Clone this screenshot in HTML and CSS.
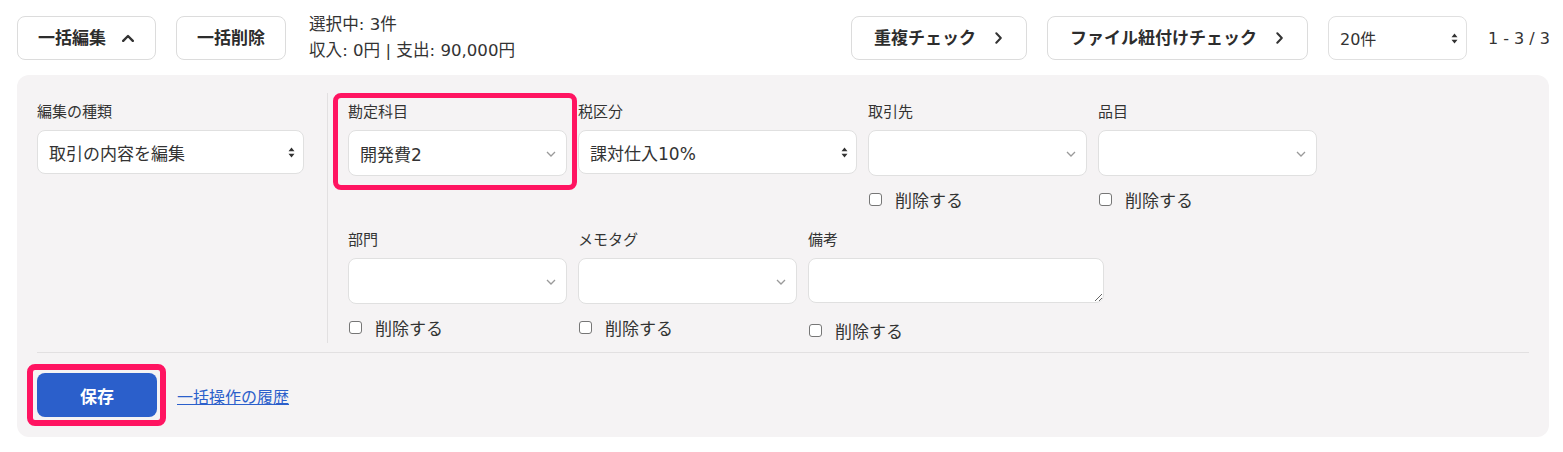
FILE: index.html
```html
<!DOCTYPE html>
<html lang="ja">
<head>
<meta charset="utf-8">
<title>一括編集</title>
<link rel="stylesheet" href="styles.css">
</head>
<body>
<div class="page">
  <div class="toolbar">
    <div class="toolbar-left">
      <button class="btn btn-edit">一括編集
        <svg class="ic-up" width="12" height="8" viewBox="0 0 12 8"><path d="M1.2 6.8 L6 2 L10.8 6.8" fill="none" stroke="#333" stroke-width="2.4" stroke-linecap="round" stroke-linejoin="round"/></svg>
      </button>
      <button class="btn">一括削除</button>
      <div class="summary">
        <div>選択中: 3件</div>
        <div>収入: 0円 | 支出: 90,000円</div>
      </div>
    </div>
    <div class="toolbar-right">
      <button class="btn btn-check">重複チェック
        <svg width="7" height="12" viewBox="0 0 7 12"><path d="M1.3 1.3 L5.8 6 L1.3 10.7" fill="none" stroke="#333" stroke-width="2" stroke-linecap="round" stroke-linejoin="round"/></svg>
      </button>
      <button class="btn btn-check">ファイル紐付けチェック
        <svg width="7" height="12" viewBox="0 0 7 12"><path d="M1.3 1.3 L5.8 6 L1.3 10.7" fill="none" stroke="#333" stroke-width="2" stroke-linecap="round" stroke-linejoin="round"/></svg>
      </button>
      <div class="select select-per">
        <span>20件</span>
        <svg class="ic-updown" width="7" height="11" viewBox="0 0 7 11"><path d="M3.5 0.5 L6.5 4.3 L0.5 4.3 Z M3.5 10.5 L6.5 6.7 L0.5 6.7 Z" fill="#333"/></svg>
      </div>
      <span class="range">1 - 3 / 3</span>
    </div>
  </div>

  <div class="panel">
    <div class="panel-body">
      <div class="col-kind">
        <div class="field">
          <div class="label">編集の種類</div>
          <div class="select select-native">
            <span>取引の内容を編集</span>
            <svg class="ic-updown" width="7" height="11" viewBox="0 0 7 11"><path d="M3.5 0.5 L6.5 4.3 L0.5 4.3 Z M3.5 10.5 L6.5 6.7 L0.5 6.7 Z" fill="#333"/></svg>
          </div>
        </div>
      </div>
      <div class="col-fields">
        <div class="field-row">
          <div class="field w219 highlight">
            <div class="label">勘定科目</div>
            <div class="select">
              <span>開発費2</span>
              <svg class="ic-down" width="10" height="6" viewBox="0 0 10 6"><path d="M1 1 L5 5 L9 1" fill="none" stroke="#9a9a9a" stroke-width="1.3"/></svg>
            </div>
          </div>
          <div class="field w279">
            <div class="label">税区分</div>
            <div class="select select-native">
              <span>課対仕入10%</span>
              <svg class="ic-updown" width="7" height="11" viewBox="0 0 7 11"><path d="M3.5 0.5 L6.5 4.3 L0.5 4.3 Z M3.5 10.5 L6.5 6.7 L0.5 6.7 Z" fill="#333"/></svg>
            </div>
          </div>
          <div class="field w219">
            <div class="label">取引先</div>
            <div class="select">
              <span></span>
              <svg class="ic-down" width="10" height="6" viewBox="0 0 10 6"><path d="M1 1 L5 5 L9 1" fill="none" stroke="#9a9a9a" stroke-width="1.3"/></svg>
            </div>
            <label class="check"><span class="box"></span>削除する</label>
          </div>
          <div class="field w219">
            <div class="label">品目</div>
            <div class="select">
              <span></span>
              <svg class="ic-down" width="10" height="6" viewBox="0 0 10 6"><path d="M1 1 L5 5 L9 1" fill="none" stroke="#9a9a9a" stroke-width="1.3"/></svg>
            </div>
            <label class="check"><span class="box"></span>削除する</label>
          </div>
        </div>
        <div class="field-row row2">
          <div class="field w219">
            <div class="label">部門</div>
            <div class="select">
              <span></span>
              <svg class="ic-down" width="10" height="6" viewBox="0 0 10 6"><path d="M1 1 L5 5 L9 1" fill="none" stroke="#9a9a9a" stroke-width="1.3"/></svg>
            </div>
            <label class="check"><span class="box"></span>削除する</label>
          </div>
          <div class="field w219">
            <div class="label">メモタグ</div>
            <div class="select">
              <span></span>
              <svg class="ic-down" width="10" height="6" viewBox="0 0 10 6"><path d="M1 1 L5 5 L9 1" fill="none" stroke="#9a9a9a" stroke-width="1.3"/></svg>
            </div>
            <label class="check"><span class="box"></span>削除する</label>
          </div>
          <div class="field w296">
            <div class="label">備考</div>
            <textarea class="memo"></textarea>
            <label class="check check-memo"><span class="box"></span>削除する</label>
          </div>
        </div>
      </div>
    </div>
    <div class="panel-footer">
      <div class="save-wrap">
        <button class="save">保存</button>
      </div>
      <a class="history" href="#">一括操作の履歴</a>
    </div>
  </div>
</div>
</body>
</html>
```

FILE: styles.css
```css
* { box-sizing: border-box; }

body {
  margin: 0;
  background: #ffffff;
  font-family: "DejaVu Sans", "Noto Sans CJK JP", sans-serif;
  color: #333333;
}

.page {
  padding: 16px 13px 15px 17px;
}

/* toolbar */
.toolbar {
  display: flex;
  justify-content: space-between;
  align-items: center;
  height: 44px;
}
.toolbar-left,
.toolbar-right {
  display: flex;
  align-items: center;
  gap: 20px;
}
.btn {
  display: flex;
  align-items: center;
  height: 44px;
  padding: 0 20px;
  border: 1px solid #dcdcdc;
  border-radius: 8px;
  background: #ffffff;
  color: #2d2d2d;
  font-family: "DejaVu Sans", "Noto Sans CJK JP", sans-serif;
  font-weight: 700;
  font-size: 17px;
  line-height: 20px;
}
.btn-edit {
  gap: 16px;
  padding-right: 21px;
}
.btn-check {
  gap: 19px;
  padding-left: 22px;
  padding-right: 24px;
}
.summary {
  margin-left: 3px;
  font-size: 16.6px;
  line-height: 26px;
  color: #333333;
}
.range {
  margin-left: 1px;
  font-size: 16px;
  color: #333333;
}

/* selects */
.select {
  display: flex;
  align-items: center;
  justify-content: space-between;
  height: 46px;
  padding: 0 10px 0 11px;
  background: #ffffff;
  border: 1px solid #e0e0e0;
  border-radius: 8px;
  font-size: 17px;
  color: #333333;
}
.select-native {
  height: 44px;
  padding-right: 8px;
}
.select-per {
  width: 139px;
  height: 44px;
  padding: 0 8px 0 11px;
  font-size: 16px;
}
.ic-down { margin-top: 1px; }

/* panel */
.panel {
  margin-top: 15px;
  margin-right: 1px;
  background: #f5f3f4;
  border-radius: 12px;
  padding: 18px 20px 20px;
}
.panel-body {
  display: flex;
  align-items: stretch;
}
.col-kind {
  width: 291px;
  padding-top: 9px;
  padding-right: 23px;
  border-right: 1px solid #e2e0e1;
}
.col-fields {
  padding: 9px 0 3px 20px;
}
.field-row {
  display: flex;
  align-items: flex-start;
  gap: 11px;
}
.row2 {
  margin-top: 21px;
}
.field {
  display: flex;
  flex-direction: column;
}
.w219 { width: 219px; }
.w279 { width: 279px; }
.w296 { width: 296px; }

.label {
  font-size: 15px;
  line-height: 20px;
  margin-bottom: 8px;
  color: #333333;
}

.highlight {
  position: relative;
}
.highlight::after {
  content: "";
  position: absolute;
  top: -9px;
  bottom: -14px;
  left: -15px;
  right: -10px;
  border: 5px solid #ff1461;
  border-radius: 8px;
  pointer-events: none;
}

.memo {
  display: block;
  width: 296px;
  height: 45px;
  margin: 0;
  border: 1px solid #e0e0e0;
  border-radius: 8px;
  background: #ffffff;
  resize: vertical;
}

.check {
  display: flex;
  align-items: center;
  height: 20px;
  margin-top: 13px;
  font-size: 17px;
  color: #333333;
}
.check-memo {
  margin-top: 17px;
}
.box {
  width: 13px;
  height: 13px;
  margin: 0 13px 0 1px;
  border: 1px solid #767676;
  border-radius: 3px;
  background: #ffffff;
}

/* footer */
.panel-footer {
  display: flex;
  align-items: center;
  gap: 20px;
  margin-top: 9px;
  padding-top: 20px;
  border-top: 1px solid #e2e0e1;
}
.save-wrap {
  position: relative;
}
.save-wrap::after {
  content: "";
  position: absolute;
  top: -9px;
  bottom: -9px;
  left: -10px;
  right: -9px;
  border: 6px solid #ff1461;
  border-radius: 8px;
  pointer-events: none;
}
.save {
  display: block;
  width: 120px;
  height: 44px;
  border: 0;
  border-radius: 8px;
  background: #2b5fcb;
  color: #ffffff;
  font-family: "DejaVu Sans", "Noto Sans CJK JP", sans-serif;
  font-weight: 700;
  font-size: 17px;
}
.history {
  color: #2b5fcb;
  font-size: 16px;
  text-decoration: underline;
  margin-top: 2px;
}
```
